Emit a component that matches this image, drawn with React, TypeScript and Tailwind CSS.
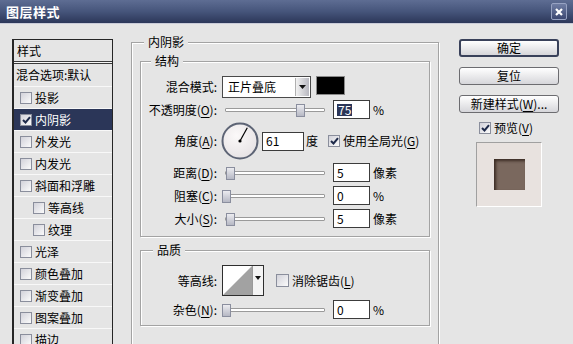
import React from "react";

const font = "font-['Noto_Sans_CJK_SC','Noto_Sans',sans-serif]";

function Check({ checked = false, size = 12 }: { checked?: boolean; size?: number }) {
  return (
    <div
      className="shrink-0 border border-[#8a8e9c] bg-gradient-to-br from-[#d2d2da] to-[#fbfbfb] flex items-center justify-center"
      style={{ width: size, height: size }}
    >
      {checked && (
        <svg width={9} height={8} viewBox="0 0 9 8">
          <path d="M1 4 L3.5 6.5 L8 1.2" fill="none" stroke="#1e2a4a" strokeWidth={2} />
        </svg>
      )}
    </div>
  );
}

function Key({ k }: { k: string }) {
  return <u className="underline underline-offset-[2px]">{k}</u>;
}

function Slider({ pos }: { pos: number }) {
  return (
    <div className="relative w-[106px] h-[16px] shrink-0">
      <div className="absolute left-[3px] right-[3px] top-[6px] h-[4px] bg-white border border-[#9a9a9a] rounded-[1px]" />
      <div
        className="absolute top-[2px] w-[9px] h-[13px] border border-[#8a8e9e] bg-gradient-to-b from-[#ececf0] to-[#b6b8c4]"
        style={{ left: pos }}
      />
    </div>
  );
}

function Input({ value, w = 37, selected = false }: { value: string; w?: number; selected?: boolean }) {
  return (
    <div
      className="h-[19px] bg-white border border-[#3c3c3c] flex items-center pl-[3px] shrink-0 leading-none"
      style={{ width: w }}
    >
      {selected ? <span className="bg-[#2b3658] text-white px-[1px]">{value}</span> : value}
    </div>
  );
}

function Label({ children }: { children: React.ReactNode }) {
  return <div className="w-[76px] text-right shrink-0 whitespace-nowrap">{children}</div>;
}

function SliderRow({
  label,
  pos,
  value,
  unit,
  mt,
}: {
  label: React.ReactNode;
  pos: number;
  value: string;
  unit: string;
  mt: number;
}) {
  return (
    <div className="flex items-center h-[19px]" style={{ marginTop: mt }}>
      <Label>{label}</Label>
      <div className="ml-[5px]">
        <Slider pos={pos} />
      </div>
      <div className="ml-[5px]">
        <Input value={value} />
      </div>
      <span className="ml-[3px]">{unit}</span>
    </div>
  );
}

const leftItems: { t: string; sub?: boolean; checked?: boolean; sel?: boolean }[] = [
  { t: "投影" },
  { t: "内阴影", checked: true, sel: true },
  { t: "外发光" },
  { t: "内发光" },
  { t: "斜面和浮雕" },
  { t: "等高线", sub: true },
  { t: "纹理", sub: true },
  { t: "光泽" },
  { t: "颜色叠加" },
  { t: "渐变叠加" },
  { t: "图案叠加" },
  { t: "描边" },
];

function Group({
  title,
  titleLeft,
  className,
  children,
}: {
  title: string;
  titleLeft: number;
  className: string;
  children: React.ReactNode;
}) {
  return (
    <div
      className={
        "relative border border-[#a3a3a3] shadow-[inset_1px_1px_0_#ffffff,1px_1px_0_#ffffff] " + className
      }
    >
      <div
        className="absolute top-[-10px] px-[4px] bg-[#e5e5e5] leading-[18px] whitespace-nowrap"
        style={{ left: titleLeft }}
      >
        {title}
      </div>
      {children}
    </div>
  );
}

export default function App() {
  return (
    <div className={"w-[573px] h-[344px] overflow-hidden bg-[#e5e5e5] text-[12px] text-black " + font}>
      {/* title bar */}
      <div className="h-[23px] bg-gradient-to-b from-[#5e6d93] via-[#46557b] to-[#2c3759] flex items-center justify-between pl-[6px] pr-[6px]">
        <span className="text-white font-bold text-[13px] tracking-[0.5px] leading-none">图层样式</span>
        <div className="w-[16px] h-[17px] border border-[#97a2c2] rounded-[2px] bg-gradient-to-b from-[#707ea4] to-[#3c4872] flex items-center justify-center">
          <svg width={8} height={8} viewBox="0 0 8 8">
            <path d="M1 1 L7 7 M7 1 L1 7" stroke="#ffffff" strokeWidth={2.2} />
          </svg>
        </div>
      </div>
      <div className="h-[1px] bg-[#c9cbd8]" />

      <div className="flex items-start">
        {/* left panel */}
        <div className="ml-[12px] mt-[15px] w-[101px] border-l-2 border-r border-t border-[#262626] bg-[#e5e5e5]">
          <div className="h-[21px] flex items-center pl-[3px]">样式</div>
          <div className="h-[1px] bg-[#3a3a3a]" />
          <div className="h-[1px] bg-[#f6f6f6]" />
          <div className="h-[1px] bg-[#3a3a3a]" />
          <div className="h-[22px] flex items-center pl-[2px] whitespace-nowrap">混合选项:默认</div>
          {leftItems.map((it) => (
            <div
              key={it.t}
              className={
                "h-[22px] border-t border-[#f8f8f8] flex items-center gap-[3px] " +
                (it.sub ? "pl-[19px] " : "pl-[6px] ") +
                (it.sel ? "bg-[#2b3658] text-white" : "")
              }
            >
              <Check checked={it.checked} />
              <span>{it.t}</span>
            </div>
          ))}
        </div>

        {/* middle */}
        <Group title="内阴影" titleLeft={12} className="ml-[18px] mt-[18px] w-[308px] h-[320px] px-[8px] pt-[18px]">
          <Group title="结构" titleLeft={10} className="h-[176px] flex flex-col">
            {/* blend mode */}
            <div className="flex items-start h-[22px] mt-[14px]">
              <div className="h-[22px] flex items-center">
                <Label>混合模式:</Label>
              </div>
              <div className="ml-[5px] w-[89px] h-[22px] bg-white border border-[#4a4a4a] flex items-center shrink-0">
                <span className="pl-[5px] flex-1">正片叠底</span>
                <div className="w-[14px] h-[18px] mr-[1px] bg-gradient-to-r from-[#f2f2f2] to-[#b8b8c0] border-l border-[#b0b0b0] flex items-center justify-center">
                  <svg width={7} height={4} viewBox="0 0 7 4">
                    <path d="M0 0 H7 L3.5 4 Z" fill="#111" />
                  </svg>
                </div>
              </div>
              <div className="ml-[5px] w-[29px] h-[19px] bg-black border border-[#8a8a8a] shrink-0" />
            </div>
            {/* opacity */}
            <div className="flex items-center h-[19px] mt-[2px]">
              <Label>
                不透明度(<Key k="O" />):
              </Label>
              <div className="ml-[5px]">
                <Slider pos={74} />
              </div>
              <div className="ml-[5px]">
                <Input value="75" selected />
              </div>
              <span className="ml-[3px]">%</span>
            </div>
            {/* angle */}
            <div className="flex items-center h-[38px] mt-[3px]">
              <Label>
                角度(<Key k="A" />):
              </Label>
              <div className="ml-[4px] shrink-0">
                <svg width={38} height={38} viewBox="0 0 38 38">
                  <defs>
                    <radialGradient id="dial" cx="40%" cy="35%" r="70%">
                      <stop offset="0%" stopColor="#fbf9f9" />
                      <stop offset="100%" stopColor="#e6e2e4" />
                    </radialGradient>
                  </defs>
                  <circle cx={19} cy={19} r={17.5} fill="url(#dial)" stroke="#5d6475" strokeWidth={2} />
                  <line x1={19} y1={19} x2={26.3} y2={5.8} stroke="#000" strokeWidth={1.2} />
                  <circle cx={19} cy={19} r={1.6} fill="#000" />
                </svg>
              </div>
              <div className="ml-[3px]">
                <Input value="61" w={42} />
              </div>
              <span className="ml-[2px]">度</span>
              <div className="ml-[10px]">
                <Check checked />
              </div>
              <span className="ml-[3px] whitespace-nowrap">
                使用全局光(<Key k="G" />)
              </span>
            </div>
            <SliderRow label={<>距离(<Key k="D" />):</>} pos={4} value="5" unit="像素" mt={3} />
            <SliderRow label={<>阻塞(<Key k="C" />):</>} pos={0} value="0" unit="%" mt={4} />
            <SliderRow label={<>大小(<Key k="S" />):</>} pos={4} value="5" unit="像素" mt={4} />
          </Group>

          <Group title="品质" titleLeft={12} className="mt-[13px] h-[76px] flex flex-col">
            <div className="flex items-center h-[31px] mt-[14px]">
              <Label>等高线:</Label>
              <div className="ml-[5px] w-[42px] h-[31px] border border-[#2e2e2e] bg-white flex shrink-0">
                <svg width={29} height={29} viewBox="0 0 29 29" className="shrink-0">
                  <path d="M0 29 L29 0 L29 29 Z" fill="#a2a2a2" />
                </svg>
                <div className="flex-1 border-l border-[#9a9a9a] bg-[#f4f4f4] flex justify-center pt-[10px]">
                  <svg width={6} height={4} viewBox="0 0 6 4">
                    <path d="M0 0 H6 L3 4 Z" fill="#111" />
                  </svg>
                </div>
              </div>
              <div className="ml-[12px]">
                <Check size={13} />
              </div>
              <span className="ml-[3px] whitespace-nowrap">
                消除锯齿(<Key k="L" />)
              </span>
            </div>
            <SliderRow label={<>杂色(<Key k="N" />):</>} pos={0} value="0" unit="%" mt={4} />
          </Group>
        </Group>

        {/* right column */}
        <div className="ml-[20px] mt-[15px] w-[100px] flex flex-col">
          <button className="h-[18px] rounded-[3px] border-2 border-[#39415a] bg-gradient-to-b from-[#ffffff] to-[#d6d6da] flex items-center justify-center leading-none">
            确定
          </button>
          <button className="mt-[10px] h-[18px] rounded-[3px] border border-[#6c6c70] bg-gradient-to-b from-[#ffffff] to-[#d6d6da] flex items-center justify-center leading-none">
            复位
          </button>
          <button className="mt-[10px] h-[18px] rounded-[3px] border border-[#6c6c70] bg-gradient-to-b from-[#ffffff] to-[#d6d6da] flex items-center justify-center leading-none whitespace-nowrap">
            新建样式(<Key k="W" />)...
          </button>
          <div className="mt-[8px] ml-[20px] flex items-center h-[13px]">
            <Check checked />
            <span className="ml-[3px]">
              预览(<Key k="V" />)
            </span>
          </div>
          <div className="mt-[8px] ml-[17px] w-[66px] h-[65px] bg-[#e8e2df] border-t border-l border-[#a0a0a0] border-r border-b border-r-white border-b-white flex items-center justify-center">
            <div className="w-[31px] h-[31px] bg-[#7a685e] shadow-[inset_2px_2px_3px_#3b2c24]" />
          </div>
        </div>
      </div>
    </div>
  );
}
